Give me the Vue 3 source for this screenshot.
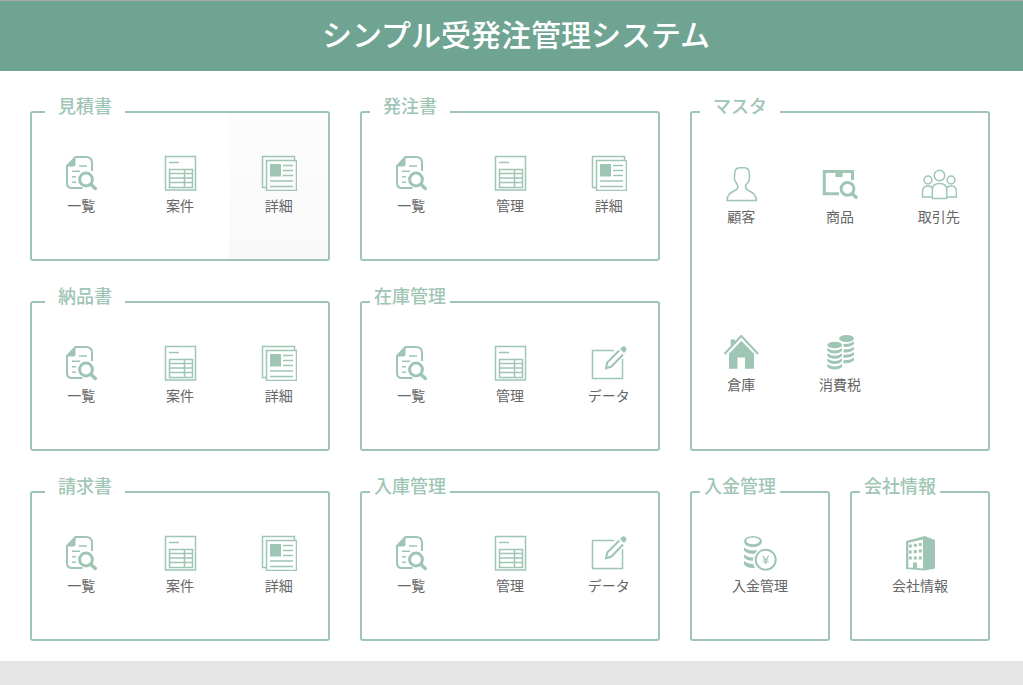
<script setup>
const list = { icon: 'list', label: '一覧' }
const detail = { icon: 'detail', label: '詳細' }
const project = { icon: 'sheet', label: '案件' }
const manage = { icon: 'sheet', label: '管理' }
const data = { icon: 'edit', label: 'データ' }

const groups = [
  { title: '見積書', area: 'quote', items: [list, project, { ...detail, active: true }] },
  { title: '発注書', area: 'order', items: [list, manage, detail] },
  {
    title: 'マスタ',
    area: 'master',
    items: [
      { icon: 'person', label: '顧客' },
      { icon: 'product', label: '商品' },
      { icon: 'people', label: '取引先' },
      { icon: 'house', label: '倉庫' },
      { icon: 'coins', label: '消費税' }
    ]
  },
  { title: '納品書', area: 'delivery', items: [list, project, detail] },
  { title: '在庫管理', area: 'stock', items: [list, manage, data] },
  { title: '請求書', area: 'invoice', items: [list, project, detail] },
  { title: '入庫管理', area: 'receiving', items: [list, manage, data] },
  { title: '入金管理', area: 'payment', items: [{ icon: 'payment', label: '入金管理' }] },
  { title: '会社情報', area: 'company', items: [{ icon: 'building', label: '会社情報' }] }
]
</script>

<template>
  <div class="page">
    <header class="header">
      <h1>シンプル受発注管理システム</h1>
    </header>

    <main class="board">
      <section v-for="g in groups" :key="g.title" class="group" :class="g.area">
        <h2>{{ g.title }}</h2>
        <div class="items">
          <button v-for="item in g.items" :key="item.label" type="button" :class="{ active: item.active }">
            <svg class="icon" viewBox="0 0 36 36" aria-hidden="true">
              <g v-if="item.icon === 'list'">
                <path d="M29 16V8Q29 2 23 2H12.500L4 11V28Q4 33 9 33H19.500" class="line w2" />
                <path d="M3 11.500L12.500 1.500V9Q12.500 11.500 10 11.500Z" class="fill" />
                <path d="M16 11H24M9 16.200H17M9 21.700H13M9 27.300H13" class="line w15" />
                <circle cx="23" cy="24.500" r="6.400" class="line w3" />
                <path d="M28 29.500L32.300 33.500" class="line w35 round" />
              </g>
              <g v-else-if="item.icon === 'sheet'">
                <rect x="3.500" y="1.500" width="30" height="33.500" class="line w15" />
                <path d="M7 7.500H17" class="line w15" />
                <path d="M7.500 14.500H30.500V32.500H7.500ZM7.500 18.500H30.500M7.500 23H30.500M7.500 27.500H30.500M22.500 14.500V32.500" class="line w15" />
              </g>
              <g v-else-if="item.icon === 'detail'">
                <path d="M5 32.500H1.500V1.500H33.500V5" class="line w15" />
                <rect x="5.500" y="5.500" width="30" height="30" class="line w15" />
                <rect x="9" y="9" width="11" height="12.500" class="fill" />
                <path d="M22 10.500H32M22 15.500H32M22 20.500H32M9 26H32M9 31.500H32" class="line w15" />
              </g>
              <g v-else-if="item.icon === 'edit'">
                <path d="M23 5.500H1.500V33.500H31.500V14" class="line w15" />
                <path d="M28.300 5.500L16.200 17.500L15 23.200L20.500 21.500L32 9.500" class="line w2" />
                <path d="M29 4L33 8L35.200 5.600Q36 3.500 34.500 2Q32.800 .7 31.200 1.700Z" class="fill" />
              </g>
              <g v-else-if="item.icon === 'person'">
                <path d="M12 15C10.500 11 12 8 12 5Q13 2 17 1.700H22Q26 2.500 26 6C26 9 27.500 11.500 26 15C25 16.500 22.500 18.500 22.500 21C22.500 26 33 24 33.300 34.500H4C4.300 24 15 26 15 21C15 18.500 13 16.500 12 15Z" class="line w15" />
              </g>
              <g v-else-if="item.icon === 'product'">
                <path d="M17 27.800H2.300V5.500H30.500V14" class="line w3" />
                <rect x="13.500" y="6" width="7" height="5" class="fill" />
                <circle cx="25.500" cy="22.800" r="6.400" class="line w3" />
                <path d="M30.500 28L34 31.300" class="line w35 round" />
              </g>
              <g v-else-if="item.icon === 'people'">
                <circle cx="18.500" cy="9.500" r="5.200" class="line w15" />
                <circle cx="7" cy="14" r="3.900" class="line w15" />
                <circle cx="30" cy="14" r="3.900" class="line w15" />
                <path d="M11.300 32.500V23Q12 17.500 18.500 17.500T25.700 23V32.500Z" class="line w15" />
                <path d="M11 31H1.500V25Q2 20 7 20Q10 20 11.500 22M26 31H35.500V25Q35 20 30 20Q27 20 25.500 22" class="line w15" />
              </g>
              <g v-else-if="item.icon === 'house'">
                <path d="M1.500 20L18.300 2L35.200 20" class="line w2" />
                <path d="M7.700 13V5.500H12V8.500Z" class="fill" />
                <path d="M6 19.800L18.300 6.800L31 19.800V34.700H22V23.500H14.500V34.700H6Z" class="fill" />
              </g>
              <g v-else-if="item.icon === 'coins'">
                <ellipse cx="12.700" cy="11" rx="7.400" ry="3.300" class="fill" />
                <ellipse cx="24.500" cy="4.500" rx="7.500" ry="3.500" class="fill" />
                <path v-for="y in [15, 20.300, 25.600, 30.900]" :key="y" :d="`M5.300 ${y - 1}Q12.700 ${y + 4} 20.100 ${y - 1}V${y + 1.500}Q18 ${y + 4.500} 12.700 ${y + 4.500}T5.300 ${y + 1.500}Z`" class="fill" />
                <path v-for="y in [9, 14.400, 19.800, 25.200]" :key="y" :d="`M21.500 ${y + 1}Q28 ${y + 1} 32 ${y - 1.500}V${y + 1}Q29 ${y + 4.500} 21.500 ${y + 4}Z`" class="fill" />
              </g>
              <g v-else-if="item.icon === 'payment'">
                <path d="M2 6.500A9 5.500 0 0 1 20 6.500A9 5.500 0 0 1 2 6.500ZM4.200 5.800A6.800 3.400 0 0 0 17.800 5.800A6.800 3.400 0 0 0 4.200 5.800Z" fill-rule="evenodd" class="fill" />
                <path d="M2 12.500Q7 16.500 16 15Q13.500 16.500 12.500 19Q5 19 2 15.500ZM2 19.200Q5 22.500 11.200 22.300L10.800 26Q4.500 25.500 2 22.500ZM2 26Q5.500 29 11.200 29L13 32.800Q5 33.500 2 29.500Z" class="fill" />
                <circle cx="23.700" cy="24.700" r="10" class="line w2" />
                <path d="M20.700 20.800L23.700 25L26.700 20.800M23.700 25V29M20.700 25H26.700M20.700 27H26.700" class="line w1" />
              </g>
              <g v-else>
                <path d="M4 6L22.700 1L33 5V33.500L22.700 35.500L4 34ZM6.300 7.700V32.500L11 32.800V27.500H15V33L21 33.500V4.500Z" fill-rule="evenodd" class="fill" />
                <path d="M8.300 9.500V12.500M13.300 8.700V11.700M18.300 8V11M8.300 15.500V18.500M13.300 15V18M18.300 14.500V17.500M8.300 21.500V24.500M13.300 21.500V24.500M18.300 21.500V24.500" class="line w3" />
              </g>
            </svg>
            <span>{{ item.label }}</span>
          </button>
        </div>
      </section>
    </main>

    <footer class="footer"></footer>
  </div>
</template>

<style>
body {
  margin: 0;
  background: #fff;
}
</style>

<style scoped>
.page {
  min-height: 100vh;
  display: flex;
  flex-direction: column;
  font-family: "Noto Sans CJK JP", sans-serif;
}
.header {
  box-sizing: border-box;
  height: 71px;
  padding: 0 0 6px 9px;
  border-top: 1px solid #a9a9a9;
  background: #6fa493;
  display: flex;
  align-items: center;
  justify-content: center;
}
h1 {
  margin: 0;
  font-size: 30px;
  line-height: 40px;
  font-weight: 500;
  color: #fff;
}
.board {
  flex: 1;
  padding: 40px 33px 20px 30px;
  display: grid;
  grid-template-columns: minmax(0, 30fr) 30px minmax(0, 30fr) 30px minmax(0, 14fr) 20px minmax(0, 14fr);
  grid-template-areas:
    "quote . order . master master master"
    "delivery . stock . master master master"
    "invoice . receiving . payment . company";
  grid-auto-rows: minmax(150px, 1fr);
  row-gap: 40px;
}
.group {
  position: relative;
  display: flex;
  border: 2px solid #9fc5b5;
  border-radius: 3px;
}
.quote { grid-area: quote; }
.order { grid-area: order; }
.master { grid-area: master; }
.delivery { grid-area: delivery; }
.stock { grid-area: stock; }
.invoice { grid-area: invoice; }
.receiving { grid-area: receiving; }
.payment { grid-area: payment; }
.company { grid-area: company; }
h2 {
  position: absolute;
  top: -20px;
  left: 8px;
  width: 80px;
  margin: 0;
  background: #fff;
  color: #9fc5b5;
  font-size: 18px;
  line-height: 24px;
  font-weight: 500;
  text-align: center;
  white-space: nowrap;
}
.quote h2,
.delivery h2,
.invoice h2 {
  left: 13px;
}
.items {
  flex: 1;
  display: grid;
  grid-template-columns: repeat(3, 1fr);
  grid-auto-rows: 1fr;
}
.payment .items,
.company .items {
  grid-template-columns: 1fr;
}
button {
  padding: 0 0 2px;
  border: 0;
  background: none;
  font: inherit;
  font-size: 14px;
  line-height: 20px;
  color: #666;
  display: flex;
  flex-direction: column;
  align-items: center;
  justify-content: center;
  gap: 4px;
  cursor: pointer;
}
button.active,
button:hover {
  background: linear-gradient(#fdfdfd, #f9f9f9);
}
.icon {
  width: 36px;
  height: 36px;
}
.fill {
  fill: #9fc5b5;
}
.line {
  fill: none;
  stroke: #9fc5b5;
}
.w1 { stroke-width: 1.2; }
.w15 { stroke-width: 1.5; }
.w2 { stroke-width: 2; }
.w3 { stroke-width: 3; }
.w35 { stroke-width: 3.5; }
.round {
  stroke-linecap: round;
}
.footer {
  height: 24px;
  background: #e6e6e6;
}
</style>
